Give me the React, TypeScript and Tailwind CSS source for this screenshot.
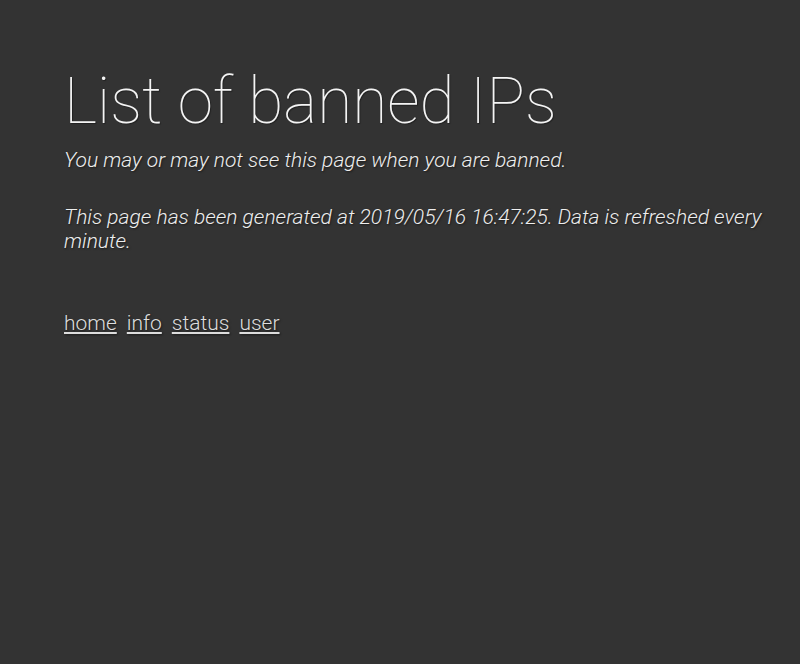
export default function App() {
	return (
		<div
			className="min-h-[664px] bg-[#333333] pl-16 pr-4 pt-[54px] text-[#eeeeee]"
			style={{ fontFamily: 'Roboto, "Liberation Sans", sans-serif' }}
		>
			<h1 className="text-[64px] font-thin leading-[96px] text-[#f4f4f4] [text-shadow:1px_1px_1px_rgba(0,0,0,0.35)]">
				List of banned IPs
			</h1>
			<p className="-mt-[2px] text-[21px] font-light italic leading-6 [text-shadow:1px_1px_2px_rgba(0,0,0,0.5)]">
				You may or may not see this page when you are banned.
			</p>
			<p className="mt-[33px] text-[21px] font-light italic leading-6 [text-shadow:1px_1px_2px_rgba(0,0,0,0.5)]">
				This page has been generated at 2019/05/16 16:47:25. Data is refreshed every minute.
			</p>
			<nav className="mt-[58px] flex gap-[10px] text-[21px] font-light leading-6 text-[#dddddd] [text-shadow:1px_1px_2px_rgba(0,0,0,0.5)]">
				<a href="#" className="underline">home</a>
				<a href="#" className="underline">info</a>
				<a href="#" className="underline">status</a>
				<a href="#" className="underline">user</a>
			</nav>
		</div>
	);
}
